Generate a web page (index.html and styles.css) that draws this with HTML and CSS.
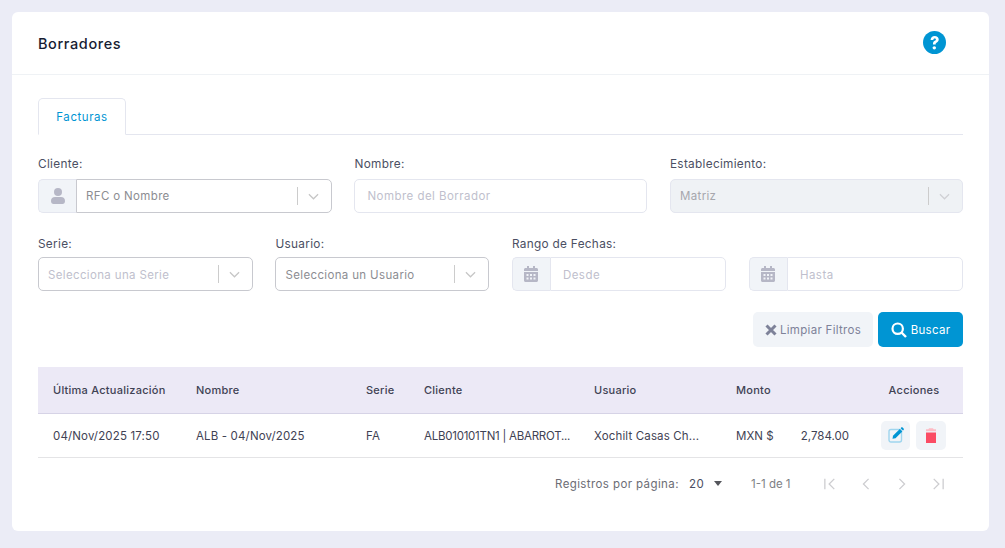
FILE: index.html
```html
<!DOCTYPE html>
<html lang="es">
<head>
<meta charset="utf-8">
<title>Borradores</title>
<link rel="stylesheet" href="styles.css">
</head>
<body>
<main class="card">
  <header class="card-head">
    <h1 class="title">Borradores</h1>
    <svg class="help" viewBox="0 0 24 24" aria-hidden="true"><circle cx="12" cy="12" r="12" fill="#0095d3"/><path d="M7.900 9.300c.2-2.500 1.900-4 4.300-4 2.400 0 4.200 1.400 4.200 3.600 0 1.600-.9 2.500-2 3.200-.9.600-1.200.9-1.200 1.900h-2.800c0-2 .5-2.900 1.900-3.700.8-.5 1.200-.9 1.200-1.500 0-.7-.5-1.100-1.300-1.100-.9 0-1.400.6-1.500 1.600z" fill="#fff"/><circle cx="11.800" cy="17.600" r="1.800" fill="#fff"/></svg>
  </header>
  <section class="card-body">
    <nav class="tabs"><span class="tab">Facturas</span></nav>

    <div class="row row-3">
      <div class="field">
        <label class="label">Cliente:</label>
        <div class="group">
          <span class="addon"><svg class="addon-icon" viewBox="0 0 14 16" aria-hidden="true"><circle cx="7" cy="4" r="4" fill="#b6b7c6"/><path d="M0 13c0-2.500 1.500-4 4-4h6c2.500 0 4 1.500 4 4 0 1.800-1 3-2.500 3h-9C1 16 0 14.800 0 13z" fill="#b6b7c6"/></svg></span>
          <div class="select select-joined"><span class="value value-dark">RFC o Nombre</span><span class="sep"></span><svg class="chev" viewBox="0 0 12 7" aria-hidden="true"><path d="M1 1l5 5 5-5" fill="none" stroke="#c6c6c6" stroke-width="1.300"/></svg></div>
        </div>
      </div>
      <div class="field">
        <label class="label">Nombre:</label>
        <div class="input input-full">Nombre del Borrador</div>
      </div>
      <div class="field">
        <label class="label">Establecimiento:</label>
        <div class="select select-disabled"><span class="value value-muted">Matriz</span><span class="sep"></span><svg class="chev" viewBox="0 0 12 7" aria-hidden="true"><path d="M1 1l5 5 5-5" fill="none" stroke="#cfd0d4" stroke-width="1.300"/></svg></div>
      </div>
    </div>

    <div class="row row-4">
      <div class="field">
        <label class="label">Serie:</label>
        <div class="select"><span class="value value-light">Selecciona una Serie</span><span class="sep"></span><svg class="chev" viewBox="0 0 12 7" aria-hidden="true"><path d="M1 1l5 5 5-5" fill="none" stroke="#c6c6c6" stroke-width="1.300"/></svg></div>
      </div>
      <div class="field">
        <label class="label">Usuario:</label>
        <div class="select"><span class="value value-dark">Selecciona un Usuario</span><span class="sep"></span><svg class="chev" viewBox="0 0 12 7" aria-hidden="true"><path d="M1 1l5 5 5-5" fill="none" stroke="#c6c6c6" stroke-width="1.300"/></svg></div>
      </div>
      <div class="field">
        <label class="label">Rango de Fechas:</label>
        <div class="group">
          <span class="addon addon-soft"><svg class="addon-icon" viewBox="0 0 14 16" aria-hidden="true"><path d="M3 0h2v2h4V0h2v2h1.500C13.300 2 14 2.700 14 3.500V5H0V3.500C0 2.700.7 2 1.500 2H3zM0 6h14v8.500c0 .8-.7 1.500-1.500 1.500h-11C.7 16 0 15.300 0 14.500z" fill="#b6b7c6"/><path d="M2.500 8h2v2h-2zM6 8h2v2H6zM9.500 8h2v2h-2zM2.500 11.500h2v2h-2zM6 11.500h2v2H6zM9.500 11.500h2v2h-2z" fill="#f1f4f8"/></svg></span>
          <div class="input input-joined">Desde</div>
        </div>
      </div>
      <div class="field">
        <label class="label label-blank">&nbsp;</label>
        <div class="group">
          <span class="addon addon-soft"><svg class="addon-icon" viewBox="0 0 14 16" aria-hidden="true"><path d="M3 0h2v2h4V0h2v2h1.500C13.300 2 14 2.700 14 3.500V5H0V3.500C0 2.700.7 2 1.500 2H3zM0 6h14v8.500c0 .8-.7 1.500-1.500 1.500h-11C.7 16 0 15.300 0 14.500z" fill="#b6b7c6"/><path d="M2.500 8h2v2h-2zM6 8h2v2H6zM9.500 8h2v2h-2zM2.500 11.500h2v2h-2zM6 11.500h2v2H6zM9.500 11.500h2v2h-2z" fill="#f1f4f8"/></svg></span>
          <div class="input input-joined">Hasta</div>
        </div>
      </div>
    </div>

    <div class="actions">
      <button class="btn btn-clear"><svg class="btn-x" viewBox="0 0 12 12" aria-hidden="true"><path d="M1.500 1.500l9 9M10.500 1.500l-9 9" stroke="#7e8299" stroke-width="3" fill="none"/></svg>Limpiar Filtros</button>
      <button class="btn btn-search"><svg class="btn-s" viewBox="0 0 16 16" aria-hidden="true"><circle cx="6.700" cy="6.700" r="5.200" fill="none" stroke="#fff" stroke-width="2.200"/><path d="M10.500 10.500l4.500 4.500" stroke="#fff" stroke-width="2.400"/></svg>Buscar</button>
    </div>

    <table class="table">
      <colgroup><col class="c1"><col class="c2"><col class="c3"><col class="c4"><col class="c5"><col class="c6"><col class="c7"></colgroup>
      <thead>
        <tr><th>Última Actualización</th><th>Nombre</th><th>Serie</th><th>Cliente</th><th>Usuario</th><th>Monto</th><th class="th-center">Acciones</th></tr>
      </thead>
      <tbody>
        <tr>
          <td class="td-text">04/Nov/2025 17:50</td>
          <td class="td-text">ALB - 04/Nov/2025</td>
          <td class="td-text">FA</td>
          <td class="td-text td-client">ALB010101TN1 | ABARROT...</td>
          <td class="td-text">Xochilt Casas Ch...</td>
          <td class="td-text"><div class="amount"><span>MXN $</span><span>2,784.00</span></div></td>
          <td><div class="row-actions">
            <button class="icon-btn icon-btn-edit"><svg viewBox="0 0 16 16" aria-hidden="true"><rect x="1" y="2.500" width="12.500" height="12.500" rx="2" fill="none" stroke="#9fd5ee" stroke-width="1.400"/><path d="M5 8.800L11.800 2l2.500 2.500-6.800 6.800-3 .5z" fill="#0095d3"/><path d="M12.600 1.200l.6-.6c.4-.4 1-.4 1.400 0l1 1c.4.400.4 1 0 1.400l-.6.600z" fill="#0095d3"/></svg></button>
            <button class="icon-btn icon-btn-del"><svg viewBox="0 0 10 15" aria-hidden="true"><path d="M0 4.500h10V15H0z" fill="#fb4c64"/><path d="M3 .3h4l.6 1H10v2H0v-2h2.400z" fill="#fdbcc5"/></svg></button>
          </div></td>
        </tr>
      </tbody>
    </table>

    <footer class="pager">
      <span class="pager-label">Registros por página:</span>
      <span class="pager-size">20<span class="caret"></span></span>
      <span class="pager-range">1-1 de 1</span>
      <span class="pager-nav">
        <svg viewBox="0 0 16 14" aria-hidden="true"><path d="M2 1v12M13 1L7 7l6 6" fill="none" stroke="#cdcdd0" stroke-width="1.500"/></svg>
        <svg viewBox="0 0 16 14" aria-hidden="true"><path d="M11 1L5 7l6 6" fill="none" stroke="#cdcdd0" stroke-width="1.500"/></svg>
        <svg viewBox="0 0 16 14" aria-hidden="true"><path d="M5 1l6 6-6 6" fill="none" stroke="#cdcdd0" stroke-width="1.500"/></svg>
        <svg viewBox="0 0 16 14" aria-hidden="true"><path d="M14 1v12M3 1l6 6-6 6" fill="none" stroke="#cdcdd0" stroke-width="1.500"/></svg>
      </span>
    </footer>
  </section>
</main>
</body>
</html>
```

FILE: styles.css
```css
* { box-sizing: border-box; }
html, body { height: 100%; }
body {
  margin: 0;
  padding: 12px 16px 17px 12px;
  background: #ebecf6;
  font-family: "Inter", "Open Sans", sans-serif;
  font-size: 11.500px;
  color: #3f4254;
  overflow: hidden;
}
.card { background: #fff; border-radius: 6px; height: 519px; }
.card-head {
  height: 63px;
  border-bottom: 1px solid #eff2f5;
  display: flex;
  align-items: center;
  justify-content: space-between;
  padding: 0 43px 1px 26px;
}
.title { margin: 2px 0 0; font-size: 14.500px; font-weight: 500; letter-spacing: .6px; color: #181c32; }
.help { width: 23px; height: 23px; }
.card-body { padding: 23px 26px 0; }
.tabs { height: 37px; border-bottom: 1px solid #e4e6ef; }
.tab {
  display: flex;
  align-items: center;
  justify-content: center;
  width: 88px;
  height: 37px;
  border: 1px solid #e4e6ef;
  border-bottom-color: #fff;
  border-radius: 5px 5px 0 0;
  color: #0095d3;
  font-size: 11.500px;
  letter-spacing: .55px;
}
.row { display: grid; }
.row-3 { grid-template-columns: 294px 293px 1fr; column-gap: 22.490px; margin-top: 21px; }
.row-4 { grid-template-columns: 215px 214px 214.500px 1fr; column-gap: 22.490px; margin-top: 23px; }
.row-3 .label { height: 23px; }
.row-4 .label { height: 21px; }
.label { display: block; color: #4b4f63; font-size: 11.800px; line-height: 16px; letter-spacing: .3px; }
.group { display: flex; height: 34px; }
.addon {
  flex: 0 0 38px;
  display: flex;
  align-items: center;
  justify-content: center;
  background: #f1f4f8;
  border: 1px solid #e4e6ef;
  border-right: 0;
  border-radius: 5px 0 0 5px;
}
.addon-icon { width: 14px; height: 16px; }
.select {
  height: 34px;
  display: flex;
  align-items: center;
  border: 1px solid #c8c9cf;
  border-radius: 5px;
  background: #fff;
  padding-left: 9px;
  flex: 1;
}
.select-joined { border-radius: 0 5px 5px 0; }
.select-disabled { background: #eff2f5; border-color: #e4e6ef; }
.value { flex: 1; font-size: 11.500px; letter-spacing: .35px; }
.value-dark { color: #8c8d92; }
.value-light { color: #c0bfcd; }
.value-muted { color: #a6a7ad; }
.sep { width: 1px; height: 18px; background: #cccccc; }
.chev { width: 11px; height: 7px; margin: 0 12px 0 10px; }
.input {
  height: 34px;
  display: flex;
  align-items: center;
  border: 1px solid #e4e6ef;
  background: #fff;
  color: #c0bfcd;
  font-size: 11.500px;
  letter-spacing: .45px;
}
.input-full { border-radius: 5px; padding-left: 12px; }
.input-joined { flex: 1; border-radius: 0 5px 5px 0; padding-left: 12px; padding-top: 1px; }
.row-4 .value { padding-top: 1px; }
.actions { display: flex; justify-content: flex-end; gap: 5px; margin-top: 21px; }
.btn {
  height: 35px;
  border: 0;
  border-radius: 5px;
  display: flex;
  align-items: center;
  justify-content: center;
  font: inherit;
  font-size: 11.500px;
  letter-spacing: .3px;
}
.btn-clear { width: 120px; background: #f1f4f8; color: #7e8299; }
.btn-search { width: 85px; background: #0095d3; color: #fff; }
.btn-x { width: 12px; height: 12px; margin-right: 3px; }
.btn-s { width: 16px; height: 16px; margin-right: 4px; }
.table { width: 100%; border-collapse: collapse; table-layout: fixed; margin-top: 20px; }
.c1 { width: 143px; }
.c2 { width: 170px; }
.c3 { width: 58px; }
.c4 { width: 170px; }
.c5 { width: 142px; }
.c6 { width: 144px; }
.table th {
  height: 46px;
  background: #ece9f6;
  border-bottom: 1px solid #d6d3e6;
  padding: 0 0 0 15px;
  text-align: left;
  font-weight: 500;
  font-size: 11px;
  letter-spacing: .25px;
  color: #3f4254;
  white-space: nowrap;
}
.table th.th-center { text-align: center; padding: 0; }
.table td {
  height: 44px;
  padding: 0 0 0 15px;
  border-bottom: 1px solid #e4e4e6;
  font-size: 11.500px;
  letter-spacing: .15px;
  color: #3f4254;
  white-space: nowrap;
}
.table td.td-text { padding-top: 2px; }
.table td.td-client { letter-spacing: -.25px; }
.amount { display: flex; justify-content: space-between; padding-right: 16px; letter-spacing: 0; }
.row-actions { display: flex; gap: 6px; margin-left: 1px; }
.icon-btn {
  width: 29px;
  height: 29px;
  border: 0;
  border-radius: 5px;
  background: #f1f4f8;
  display: flex;
  align-items: center;
  justify-content: center;
  padding: 0;
}
.icon-btn-del { width: 30px; }
.icon-btn-edit svg { width: 16px; height: 16px; }
.icon-btn-del svg { width: 10px; height: 15px; }
.pager { display: flex; align-items: center; margin-top: 17px; height: 18px; padding-left: 517px; font-size: 11.500px; letter-spacing: .4px; color: #6c6d75; }
.pager-label { width: 134px; }
.pager-size { width: 62px; display: flex; align-items: center; color: #4b4f63; }
.caret { margin-left: 10px; border: 4px solid transparent; border-top: 5px solid #55565c; border-bottom: 0; }
.pager-range { width: 72px; color: #7e7f85; letter-spacing: 0; }
.pager-nav { display: flex; gap: 22px; }
.pager-nav svg { width: 14px; height: 12px; }
```
